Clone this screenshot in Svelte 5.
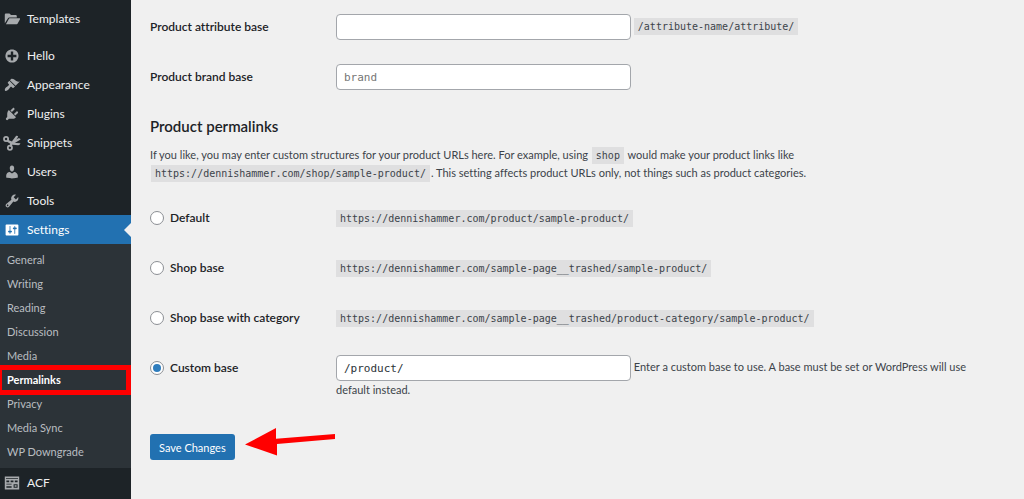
<script>
  const groups = [
    [
      {
        label: 'Templates',
        icon: 'M1 15.2V4.6C1 3.7 1.7 3 2.6 3h4.2l2 2h5.6c.9 0 1.6.7 1.6 1.6V8H6.6c-.7 0-1.3.4-1.6 1zM2.4 16.5L6 9.9c.2-.5.6-.8 1.1-.8H19.2c.7 0 1.1.7.8 1.3l-2.9 5.3c-.3.5-.7.8-1.3.8z'
      }
    ],
    [
      { label: 'Hello', icon: 'M15.8 4.2c3.2 3.21 3.2 8.39 0 11.6-3.21 3.2-8.39 3.2-11.6 0C1 12.59 1 7.41 4.2 4.2 7.41 1 12.59 1 15.8 4.2zm-4.3 11.3v-4h4v-3h-4v-4h-3v4h-4v3h4v4h3z' },
      { label: 'Appearance', icon: 'M14.48 11.06L7.41 3.99l1.5-1.5c.5-.56 2.3-.47 3.51.32 1.21.8 1.43 1.28 2.91 2.1 1.18.64 2.45 1.26 4.45.85zm-.71.71L6.7 4.7 4.93 6.47c-.39.39-.39 1.02 0 1.41l1.06 1.06c.39.39.39 1.03 0 1.42-.6.6-1.43 1.11-2.21 1.69-.35.26-.7.53-1.01.84C1.43 14.23.4 16.08 1.4 17.07c.99 1 2.84-.03 4.18-1.36.31-.31.58-.66.85-1.02.57-.78 1.08-1.61 1.69-2.21.39-.39 1.02-.39 1.41 0l1.06 1.06c.39.39 1.02.39 1.41 0z' },
      { label: 'Plugins', icon: 'M13.11 4.36L9.87 7.6 8 5.73l3.24-3.24c.35-.34 1.05-.2 1.56.32.52.51.66 1.21.31 1.55zm-8 1.77l.91-1.12 9.01 9.01-1.19.84c-.71.71-2.63 1.16-3.82 1.16H6.14L4.9 17.26c-.59.59-1.54.59-2.12 0-.59-.58-.59-1.53 0-2.12l1.24-1.24v-3.88c0-1.13.4-3.19 1.09-3.89zm7.26 3.97l3.24-3.24c.34-.35 1.04-.21 1.55.31.52.51.66 1.21.31 1.55l-3.24 3.25z' },
      { label: 'Snippets', scissors: true },
      { label: 'Users', icon: 'M10 9.25c-2.27 0-2.73-3.44-2.73-3.44C7 4.02 7.82 2 9.97 2c2.16 0 2.98 2.02 2.71 3.81 0 0-.41 3.44-2.68 3.44zm0 2.57L12.72 10c2.39 0 4.52 2.33 4.52 4.53v2.49s-3.65 1.13-7.24 1.13c-3.65 0-7.24-1.13-7.24-1.13v-2.49c0-2.25 1.94-4.48 4.47-4.48z' },
      { label: 'Tools', icon: 'M16.68 9.77c-1.34 1.34-3.3 1.67-4.95.99l-5.41 6.52c-.99.99-2.59.99-3.58 0s-.99-2.59 0-3.57l6.52-5.42c-.68-1.65-.35-3.61.99-4.95 1.28-1.28 3.12-1.62 4.72-1.06l-2.89 2.89 2.82 2.82 2.86-2.87c.53 1.58.18 3.39-1.08 4.65zM3.81 16.21c.4.39 1.04.39 1.43 0 .4-.4.4-1.04 0-1.43-.39-.4-1.03-.4-1.43 0-.39.39-.39 1.03 0 1.43z' },
      {
        label: 'Settings',
        icon: 'M18 16V4c0-.55-.45-1-1-1H3c-.55 0-1 .45-1 1v12c0 .55.45 1 1 1h14c.55 0 1-.45 1-1zM8 11h1c.55 0 1 .45 1 1s-.45 1-1 1H8v1.5c0 .28-.22.5-.5.5s-.5-.22-.5-.5V13H6c-.55 0-1-.45-1-1s.45-1 1-1h1V5.5c0-.28.22-.5.5-.5s.5.22.5.5V11zm5-2h-1c-.55 0-1-.45-1-1s.45-1 1-1h1V5.5c0-.28.22-.5.5-.5s.5.22.5.5V7h1c.55 0 1 .45 1 1s-.45 1-1 1h-1v5.5c0 .28-.22.5-.5.5s-.5-.22-.5-.5V9z',
        current: true,
        children: ['General', 'Writing', 'Reading', 'Discussion', 'Media', 'Permalinks', 'Privacy', 'Media Sync', 'WP Downgrade']
      },
      { label: 'ACF', icon: 'M1 2h18v16H1zM2.5 4v1h15V4zM3 7v2h3.5V7zM8.3 7v2h3.5V7zM13.5 7v2H17V7zM3 11v1h6.5v-1zM3 14v2h6.5v-2zM12 11.5v4.5h5v-4.5zM13.3 12.8h2.4v1.9h-2.4z' }
    ]
  ];

  const bases = [
    { id: 'default', label: 'Default', url: 'https://dennishammer.com/product/sample-product/' },
    { id: 'shop', label: 'Shop base', url: 'https://dennishammer.com/sample-page__trashed/sample-product/' },
    { id: 'category', label: 'Shop base with category', url: 'https://dennishammer.com/sample-page__trashed/product-category/sample-product/' }
  ];

  let selected = $state('custom');
  let attributeBase = $state('');
  let brandBase = $state('');
  let customBase = $state('/product/');
</script>

<div class="admin">
  <nav class="menu" aria-label="Main menu">
    {#each groups as group}
      <ul class="group">
        {#each group as item}
          <li>
            <a class="item" class:current={item.current} href="#top">
              <svg class="icon" viewBox="0 0 20 20" aria-hidden="true">
                {#if item.scissors}
                  <g fill="none" stroke="currentColor" stroke-width="2.2">
                    <circle cx="2.6" cy="5" r="2.6" />
                    <circle cx="7.4" cy="16" r="2.6" />
                  </g>
                  <path d="M4 5.5L10 8.2 18 4.2c1.3-.3 2.3.2 2.8 1.3L10.8 11.6 9.3 15 6.8 14 7.8 10.8 3.4 8.2z" />
                  <path d="M9.8 8L15 1.2c1.2-.8 2.4-.2 2.7 1L13 9zM11 9.8l9.5.6c-.3 1.7-1.4 2.3-2.6 2.3l-7.4-.6z" />
                {:else}
                  <path fill-rule="evenodd" d={item.icon} />
                {/if}
              </svg>
              <span>{item.label}</span>
            </a>
            {#if item.children}
              <ul class="submenu">
                {#each item.children as child}
                  <li><a class="sub" class:active={child === 'Permalinks'} href="#top">{child}</a></li>
                {/each}
              </ul>
            {/if}
          </li>
        {/each}
      </ul>
    {/each}
  </nav>

  <main>
    <form onsubmit={(e) => e.preventDefault()}>
      <div class="row">
        <label class="name" for="attribute-base">Product attribute base</label>
        <div class="field">
          <input class="text" id="attribute-base" type="text" bind:value={attributeBase} />
          <code>/attribute-name/attribute/</code>
        </div>
      </div>
      <div class="row">
        <label class="name" for="brand-base">Product brand base</label>
        <div class="field">
          <input class="text" id="brand-base" type="text" placeholder="brand" bind:value={brandBase} />
        </div>
      </div>

      <h2>Product permalinks</h2>
      <p>
        If you like, you may enter custom structures for your product URLs here. For example, using
        <code class="inset">shop</code> would make your product links like
        <code class="inset">https://dennishammer.com/shop/sample-product/</code>. This setting affects product
        URLs only, not things such as product categories.
      </p>

      {#each bases as base}
        <div class="row">
          <label class="name">
            <input type="radio" name="base" value={base.id} bind:group={selected} />{base.label}
          </label>
          <div class="field"><code>{base.url}</code></div>
        </div>
      {/each}
      <div class="row">
        <label class="name">
          <input type="radio" name="base" value="custom" bind:group={selected} />Custom base
        </label>
        <div class="field">
          <input class="text" type="text" aria-label="Custom base" bind:value={customBase} />
          <span>Enter a custom base to use. A base must be set or WordPress will use default instead.</span>
        </div>
      </div>

      <div class="submit">
        <button type="submit">Save Changes</button>
        <svg class="arrow" viewBox="0 0 92 30" aria-hidden="true">
          <path d="M0 17.5L31 1V11.8L90 7V12L32 17V28.5z" fill="#f00" />
        </svg>
      </div>
    </form>
  </main>
</div>

<style>
  :global(body) {
    margin: 0;
    background: #f0f0f0;
  }

  .admin {
    display: flex;
    min-height: 100vh;
    font-family: Lato, 'Open Sans', sans-serif;
    font-size: 11px;
    font-variant-ligatures: none;
    line-height: 18px;
    color: #3c434a;
  }

  .menu {
    flex: none;
    width: 131px;
    padding-top: 4px;
    box-sizing: border-box;
    background: #1d2327;
  }

  ul {
    list-style: none;
    margin: 0;
    padding: 0;
  }

  .group + .group {
    margin-top: 8px;
  }

  a {
    text-decoration: none;
  }

  .item {
    position: relative;
    display: flex;
    align-items: center;
    gap: 7px;
    height: 29px;
    padding-left: 4px;
    font-size: 12px;
    color: #f0f0f1;
  }

  .icon {
    width: 16px;
    height: 16px;
    fill: currentColor;
    color: #a7aaad;
    overflow: visible;
  }

  .current {
    background: #2271b1;
    color: #fff;
  }

  .current .icon {
    color: #fff;
  }

  .current::after {
    content: '';
    position: absolute;
    right: 0;
    top: 8px;
    border: solid transparent;
    border-width: 7px 7px 7px 0;
    border-right-color: #f0f0f0;
  }

  .submenu {
    padding: 4px 0;
    background: #2c3338;
  }

  .sub {
    position: relative;
    display: block;
    padding-left: 7px;
    line-height: 24px;
    color: #b9bdc1;
  }

  .active {
    font-weight: 700;
    color: #fff;
  }

  .active::after {
    content: '';
    position: absolute;
    inset: -3px 0;
    border: 5px solid #f00;
    border-left-width: 2px;
  }

  main {
    flex: 1;
    min-width: 0;
    padding: 2px 24px 0 19px;
  }

  .row {
    display: grid;
    grid-template-columns: 186px 1fr;
    align-items: start;
    min-height: 50px;
    padding-top: 12px;
    box-sizing: border-box;
  }

  .name {
    display: flex;
    align-items: center;
    gap: 6px;
    min-height: 26px;
    font-size: 12px;
    font-weight: 600;
    color: #1d2327;
  }

  .field {
    padding-top: 4px;
  }

  .field:has(.text) {
    padding-top: 0;
  }

  .text {
    width: 295px;
    height: 26px;
    margin: 0;
    padding: 0 7px;
    box-sizing: border-box;
    border: 1px solid #a3a6ab;
    border-radius: 4px;
    background: #fff;
    color: #2c3338;
    font: 11px 'DejaVu Sans Mono', monospace;
    vertical-align: middle;
  }

  .text::placeholder {
    color: #757575;
    opacity: 1;
  }

  code {
    padding: 3px 4px;
    background: #dfdfe0;
    font: 10px 'DejaVu Sans Mono', monospace;
    white-space: nowrap;
    color: #3c434a;
  }

  .inset {
    margin: 0 1px;
  }

  h2 {
    margin: 14px 0 10px;
    font-size: 15px;
    line-height: 20px;
    font-weight: 600;
    color: #1d2327;
  }

  p {
    margin: 0 0 11px;
  }

  input[type='radio'] {
    appearance: none;
    display: grid;
    place-items: center;
    width: 14px;
    height: 14px;
    margin: 0;
    border: 1px solid #8c8f94;
    border-radius: 50%;
    background: #fff;
  }

  input[type='radio']:checked::before {
    content: '';
    width: 8px;
    height: 8px;
    border-radius: 50%;
    background: #2f7dbd;
  }

  .submit {
    display: flex;
    gap: 10px;
    padding-top: 35px;
  }

  button {
    height: 26px;
    padding: 0 9px;
    border: 0;
    border-radius: 3px;
    background: #2271b1;
    color: #fff;
    font: 11px Lato, 'Open Sans', sans-serif;
  }

  .arrow {
    width: 92px;
    height: 30px;
    margin-top: -7px;
  }
</style>
